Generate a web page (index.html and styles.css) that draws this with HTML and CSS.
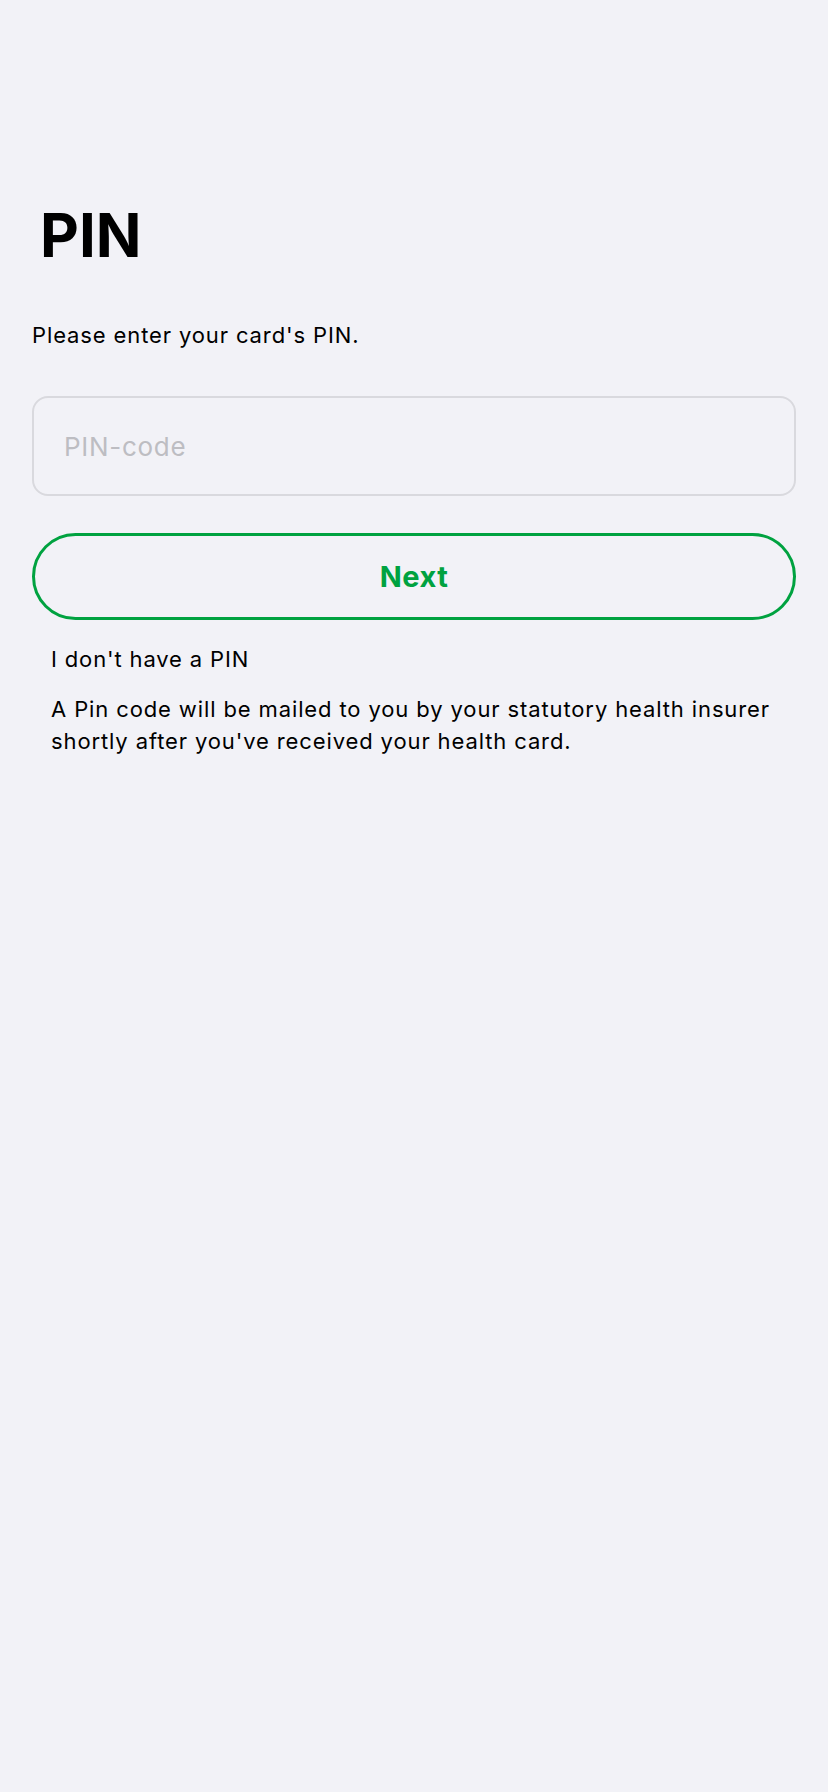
FILE: index.html
```html
<!DOCTYPE html>
<html lang="en">
<head>
<meta charset="utf-8">
<title>PIN</title>
<link rel="stylesheet" href="styles.css">
</head>
<body>
<main class="screen">
  <h1 class="title">PIN</h1>
  <p class="subtitle">Please enter your card's PIN.</p>
  <div class="field"><input class="field-input" type="password" placeholder="PIN-code"></div>
  <button class="btn-next" type="button">Next</button>
  <div class="help">
    <p class="help-link">I don't have a PIN</p>
    <p class="help-text">A Pin code will be mailed to you by your statutory health insurer shortly after you've received your health card.</p>
  </div>
</main>
</body>
</html>
```

FILE: styles.css
```css
html, body {
  margin: 0;
  padding: 0;
  background: #f2f2f7;
}
body {
  font-family: Inter, "Noto Sans", sans-serif;
  color: #000;
  min-height: 1792px;
}
.screen {
  display: flex;
  flex-direction: column;
  padding: 199px 32px 0;
}
.title {
  margin: 0;
  padding-left: 8px;
  font-size: 60px;
  line-height: 72px;
  font-weight: 700;
  letter-spacing: 0;
}
.subtitle {
  margin: 50px 0 0;
  font-size: 22px;
  line-height: 28px;
  letter-spacing: 0.88px;
}
.field {
  margin-top: 47px;
}
.field-input {
  box-sizing: border-box;
  width: 100%;
  height: 100px;
  border: 2px solid #d9d9de;
  border-radius: 16px;
  background: #f2f2f7;
  padding: 0 30px;
  font-family: Inter, "Noto Sans", sans-serif;
  font-size: 26px;
  letter-spacing: 0.7px;
  outline: none;
}
.field-input::placeholder {
  color: #bdbdc2;
}
.btn-next {
  box-sizing: border-box;
  margin-top: 37px;
  width: 100%;
  height: 87px;
  border: 3.5px solid #00a240;
  border-radius: 44px;
  background: transparent;
  color: #00a240;
  font-family: Inter, "Noto Sans", sans-serif;
  font-size: 29px;
  font-weight: 700;
  letter-spacing: 0.5px;
}
.help {
  padding: 0 19px;
}
.help-link {
  margin: 23px 0 0;
  font-size: 22px;
  line-height: 32px;
  letter-spacing: 0.85px;
}
.help-text {
  margin: 18px 0 0;
  font-size: 22px;
  line-height: 32px;
  letter-spacing: 0.88px;
}
```
